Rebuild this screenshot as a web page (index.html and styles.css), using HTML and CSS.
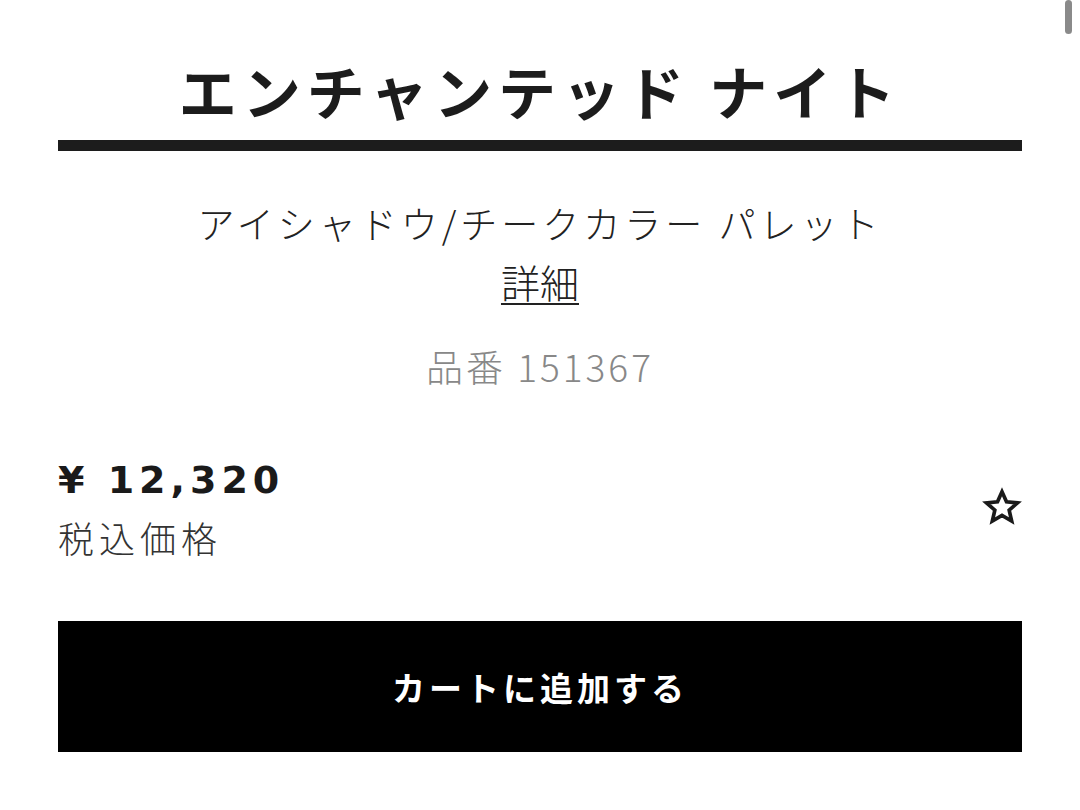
FILE: index.html
```html
<!DOCTYPE html>
<html lang="ja">
<head>
	<meta charset="UTF-8">
	<title>エンチャンテッド ナイト</title>
	<link rel="stylesheet" href="styles.css">
</head>
<body>
<div class="scroll-thumb"></div>
<div class="page">
	<h1 class="title">エンチャンテッド ナイト</h1>
	<div class="rule"></div>
	<p class="subtitle">アイシャドウ/チークカラー パレット</p>
	<a href="javascript:;" class="detail">詳細</a>
	<p class="code">品番 151367</p>

	<div class="price-row">
		<div class="price">
			<div class="amount">¥ 12,320</div>
			<div class="tax">税込価格</div>
		</div>
		<a href="javascript:;" class="fav">
			<svg width="42" height="40" viewBox="0 0 24 24">
				<path d="M12 2.8l2.7 6.1 6.6.6-5 4.4 1.5 6.5L12 17l-5.8 3.4 1.5-6.5-5-4.4 6.6-.6z" fill="none" stroke="#1a1a1a" stroke-width="2.2" stroke-linejoin="miter"/>
			</svg>
		</a>
	</div>

	<a href="javascript:;" class="cart">カートに追加する</a>
</div>
</body>
</html>
```

FILE: styles.css
```css
*{
	margin: 0;
	padding: 0;
	text-decoration: none;
}
body{
	background: #fff;
	color: #1a1a1a;
	font-family: "Noto Sans CJK JP", "Noto Sans", sans-serif;
}
.scroll-thumb{
	position: absolute;
	top: 0;
	right: 8px;
	width: 7px;
	height: 34px;
	border-radius: 4px;
	background: #8a8a8a;
}
.page{
	display: flex;
	flex-direction: column;
	align-items: center;
	padding: 48px 58px 0;
}
.title{
	font-size: 58px;
	font-weight: 700;
	letter-spacing: 6px;
	line-height: 84px;
	color: #1c1c1c;
}
.rule{
	align-self: stretch;
	height: 11px;
	margin-top: 8px;
	background: #1c1c1c;
}
.subtitle{
	margin-top: 44px;
	font-size: 37px;
	font-weight: 300;
	letter-spacing: 4px;
	line-height: 56px;
	color: #222;
}
.detail{
	margin-top: 2px;
	font-size: 39px;
	font-weight: 300;
	line-height: 56px;
	color: #222;
	text-decoration: underline;
	text-underline-offset: 5px;
	text-decoration-thickness: 2px;
}
.code{
	margin-top: 29px;
	font-size: 37px;
	font-weight: 300;
	letter-spacing: 3px;
	line-height: 56px;
	color: #888;
}
.price-row{
	align-self: stretch;
	display: flex;
	align-items: center;
	justify-content: space-between;
	margin-top: 59px;
}
.amount{
	font-family: "DejaVu Sans", "Noto Sans", sans-serif;
	font-size: 38px;
	font-weight: 700;
	letter-spacing: 5px;
	line-height: 54px;
	color: #1a1a1a;
}
.tax{
	margin-top: 7px;
	font-size: 36px;
	font-weight: 300;
	letter-spacing: 5px;
	line-height: 46px;
	color: #333;
}
.fav{
	display: flex;
	margin-right: -1px;
}
.cart{
	align-self: stretch;
	display: flex;
	align-items: center;
	justify-content: center;
	height: 131px;
	margin-top: 61px;
	background: #000;
	color: #fff;
	font-size: 33px;
	font-weight: 700;
	letter-spacing: 4px;
}
```
